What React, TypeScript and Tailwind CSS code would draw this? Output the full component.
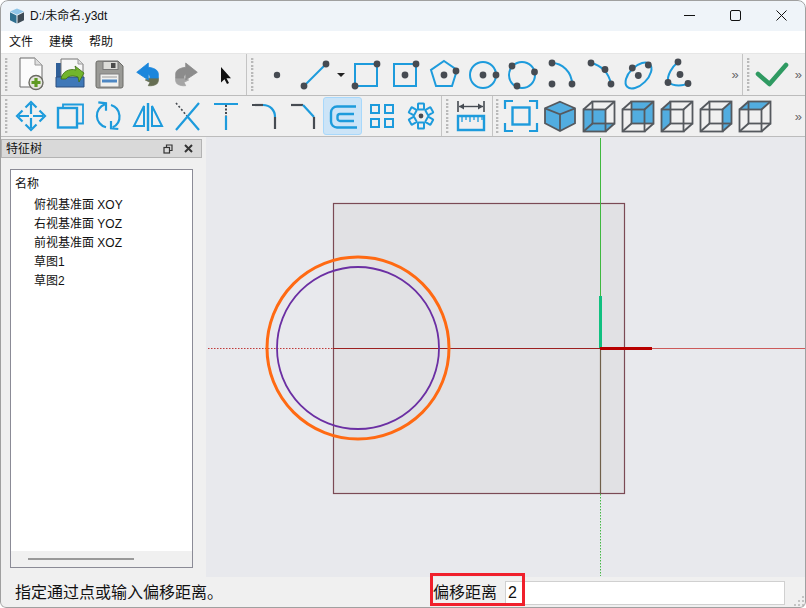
import type { ReactNode } from "react";

const BLUE = "#1d9bdc";
const DARK = "#464b52";

function Icon({ children }: { children: ReactNode }) {
	return (
		<svg width="32" height="32" viewBox="0 0 32 32" fill="none" className="overflow-visible">
			{children}
		</svg>
	);
}

function Dot({ x, y, r = 3.4 }: { x: number; y: number; r?: number }) {
	return <circle cx={x} cy={y} r={r} fill={DARK} />;
}

function Btn({ children, active = false }: { children?: ReactNode; active?: boolean }) {
	return (
		<div
			className={`w-[39px] h-[38px] shrink-0 flex items-center justify-center rounded-[3px] border ${
				active ? "bg-[#cce4f7] border-[#a8d8fb]" : "border-transparent"
			}`}
		>
			{children}
		</div>
	);
}

function Grip() {
	return (
		<div className="w-[4px] h-[34px] shrink-0 flex flex-col justify-between">
			{Array.from({ length: 10 }).map((_, i) => (
				<div key={i} className="h-[2px] w-[3px] border-l-2 border-dotted border-[#b9b9b9] bg-[#dcdcdc]" />
			))}
		</div>
	);
}

function Sep() {
	return <div className="w-px self-stretch shrink-0 bg-[#c4c4c4]" />;
}

function More({ className = "" }: { className?: string }) {
	return <span className={`text-[13px] leading-none text-[#666] font-['Liberation_Sans',sans-serif] ${className}`}>»</span>;
}

function NewIcon() {
	return (
		<Icon>
			<path d="M5 -1h15l7 7v22H5z" fill="#fbfbfb" stroke="#6a6a6a" strokeWidth="1" />
			<path d="M20 -1v7h7" fill="#dedede" stroke="#9a9a9a" />
			<circle cx="21" cy="23.500" r="7" fill="#e6e6e0" stroke="#6b6b63" strokeWidth="1.400" />
			<path d="M21 19v9M16.500 23.500h9" stroke="#5f9a22" strokeWidth="3.200" />
		</Icon>
	);
}

function OpenIcon() {
	return (
		<Icon>
			<path d="M2 4h6v16H2z" fill="#2f5f98" />
			<path d="M7 0h17l5 5v16H7z" fill="#f7f7f7" stroke="#777" />
			<path d="M24 0v5h5" fill="#ddd" stroke="#999" />
			<path d="M2 18h4c2-1 3-1 5 0h19v10H2z" fill="#3f78b8" stroke="#2c4f7e" />
			<path d="M7 20c1-7 8-11 15-9l-1-4 9 7-5 9-1-5c-6-2-10-1-12 2z" fill="#72b52c" stroke="#3c6d14" strokeWidth="0.800" />
		</Icon>
	);
}

function SaveIcon() {
	return (
		<Icon>
			<path d="M3 4a2 2 0 0 1 2-2h20l5 5v20a2 2 0 0 1-2 2H5a2 2 0 0 1-2-2z" fill="#9a9a96" stroke="#6a6a66" />
			<rect x="10" y="2.500" width="15" height="8" fill="#dcdcd8" stroke="#777" />
			<rect x="18" y="4" width="4.500" height="5" fill="#4b4b4b" />
			<rect x="7" y="15" width="19" height="13" fill="#f0f0ee" stroke="#808080" />
			<path d="M9 18h15" stroke="#9a9a9a" />
			<path d="M9 22h15" stroke="#4d87c4" strokeWidth="3" />
		</Icon>
	);
}

function TurnIcon({ top, under, flip = false }: { top: string; under: string; flip?: boolean }) {
	return (
		<Icon>
			<g transform={flip ? "matrix(-1 0 0 1 31 0)" : undefined} strokeLinejoin="round">
				<path d="M13.300 21 18 19h8.300c.5 3-.5 5-1.600 6-2.200 1.500-5.400 2-8.400 1.700l1.700-3.400z" fill={under} stroke={under} strokeWidth="0.800" />
				<path d="M4.700 13.300 16.300 4v4.300c5 .5 10 2.500 10 6.700v4h-8.300c0-2-1-3.500-1.700-3.500V21z" fill={top} stroke={top} strokeWidth="0.800" />
			</g>
		</Icon>
	);
}

function CursorIcon() {
	return (
		<Icon>
			<path d="M11 8v15.500l3.500-3.200 2.500 4.700 2-1-2.500-4.700H21z" fill="#111" />
		</Icon>
	);
}

function MoveIcon() {
	return (
		<Icon>
			<g stroke={BLUE} strokeWidth="2.200">
				<path d="M4 16h10M18 16h10M16 4v10M16 18v10" />
				<path d="M10.500 7.500l5.500-5.500 5.500 5.500M10.500 24.500l5.500 5.500 5.500-5.500M7.500 10.500 2 16l5.500 5.500M24.500 10.500 30 16l-5.500 5.500" />
			</g>
		</Icon>
	);
}

function CopyIcon() {
	return (
		<Icon>
			<path d="M9 8V4.500h20v19h-6" stroke={BLUE} strokeWidth="1.800" />
			<rect x="4" y="8" width="19" height="19.500" stroke={BLUE} strokeWidth="2.400" />
		</Icon>
	);
}

function RotateIcon() {
	return (
		<Icon>
			<g stroke={BLUE} strokeWidth="2.200">
				<path d="M13 27.300A12 12 0 0 1 12 4.300" />
				<path d="M5.300 2.300 13 3.300v7.400" />
				<path d="M18 5A12 12 0 0 1 19.700 27.300" />
				<path d="M25.300 29 18 28.300V21" />
			</g>
		</Icon>
	);
}

function MirrorIcon() {
	return (
		<Icon>
			<g stroke={BLUE} strokeWidth="2">
				<path d="M16 3v28" strokeWidth="2.400" />
				<path d="M12 6 2 26h10zM20 6l10 20H20z" />
			</g>
		</Icon>
	);
}

function TrimIcon() {
	return (
		<Icon>
			<path d="M5 3l11 13" stroke={DARK} strokeWidth="1.600" strokeDasharray="2 2" />
			<path d="M16 16l12 14M28 3 5 30" stroke={BLUE} strokeWidth="2.200" />
		</Icon>
	);
}

function ExtendIcon() {
	return (
		<Icon>
			<path d="M4 4h24" stroke={BLUE} strokeWidth="2.200" />
			<path d="M16 5v11" stroke={DARK} strokeWidth="2" strokeDasharray="2 1.500" />
			<path d="M16 16v14" stroke={BLUE} strokeWidth="2.200" />
		</Icon>
	);
}

function FilletIcon() {
	return (
		<Icon>
			<path d="M3 5h11" stroke={DARK} strokeWidth="2.200" />
			<path d="M14 5c7 0 12 5 12 12" stroke={BLUE} strokeWidth="2.200" />
			<path d="M26 17v12" stroke={DARK} strokeWidth="2.200" />
		</Icon>
	);
}

function ChamferIcon() {
	return (
		<Icon>
			<path d="M3 5h12" stroke={DARK} strokeWidth="2.200" />
			<path d="M15 5l11 12" stroke={BLUE} strokeWidth="2.200" />
			<path d="M26 17v12" stroke={DARK} strokeWidth="2.200" />
		</Icon>
	);
}

function OffsetIcon() {
	return (
		<Icon>
			<g stroke={BLUE} strokeWidth="2.400">
				<path d="M29 6.500H10a6 6 0 0 0-6 6v9a6 6 0 0 0 6 6h20" />
				<path d="M27 14H13a2.500 2.500 0 0 0-2.500 2.500v2a2.500 2.500 0 0 0 2.500 2.500h14" />
			</g>
		</Icon>
	);
}

function GridIcon() {
	return (
		<Icon>
			<g stroke={BLUE} strokeWidth="2">
				<rect x="5" y="5" width="8" height="8" />
				<rect x="19" y="5" width="8" height="8" />
				<rect x="5" y="19" width="8" height="8" />
				<rect x="19" y="19" width="8" height="8" />
			</g>
		</Icon>
	);
}

function RingIcon() {
	return (
		<Icon>
			{[0, 60, 120, 180, 240, 300].map((a) => (
				<rect
					key={a}
					x="13"
					y="3.500"
					width="6"
					height="6"
					rx="0.500"
					stroke={BLUE}
					strokeWidth="2"
					transform={`rotate(${a} 16 16)`}
				/>
			))}
			<Dot x={16} y={16} r={2.400} />
		</Icon>
	);
}

function DimIcon() {
	return (
		<Icon>
			<path d="M3 1v11M29 1v11" stroke={DARK} strokeWidth="1.600" />
			<path d="M4 6.500h24" stroke={DARK} strokeWidth="1.400" />
			<path d="M4 6.500l5-3v6zM28 6.500l-5-3v6z" fill={DARK} />
			<path d="M3 16h26v14H3z" stroke={BLUE} strokeWidth="2.400" />
			<path d="M7 16v6M11 16v4M15 16v6M19 16v4M23 16v6M27 16v4" stroke={BLUE} strokeWidth="1.300" />
		</Icon>
	);
}

function FitIcon() {
	return (
		<Icon>
			<g stroke={BLUE} strokeWidth="2.200">
				<path d="M0 9V1h8M24 1h8v8M32 23v8h-8M8 31H0v-8" />
				<rect x="7.500" y="7.500" width="17" height="17" strokeWidth="2.400" />
			</g>
		</Icon>
	);
}

function SolidCube() {
	return (
		<Icon>
			<path d="M16 1.700 31 8.300v15L16 31 1 23.300v-15z" fill="#52ade0" stroke="#55595e" strokeWidth="1.800" />
			<path d="M1 8.300l15 6 15-6M16 14.300V31" stroke="#55595e" strokeWidth="1.800" />
		</Icon>
	);
}

// faces of the wire cube that get the blue fill
const cubeFaces = {
	front: "M0.500 9.500h22v22h-22z M0.500 31.500l9-8h22l-9 8z",
	back: "M9.500 1.500h22v22h-22z",
	left: "M0.500 9.500l9-8v22l-9 8z",
	right: "M22.500 9.500l9-8v22l-9 8z",
	top: "M0.500 9.500l9-8h22l-9 8z",
};

function WireCube({ face }: { face: keyof typeof cubeFaces }) {
	return (
		<Icon>
			<path d={cubeFaces[face]} fill="#52ade0" />
			<g stroke="#55595e" strokeWidth="1.800">
				<rect x="9.500" y="1.500" width="22" height="22" />
				<rect x="0.500" y="9.500" width="22" height="22" />
				<path d="M0.500 9.500l9-8M22.500 9.500l9-8M0.500 31.500l9-8M22.500 31.500l9-8" />
			</g>
		</Icon>
	);
}

function ToolbarOne() {
	return (
		<div className="flex items-center h-[42px] bg-[#f0f0f0] border-b border-[#bcbcbc] pl-[5px]">
			<Grip />
			<div className="w-[2px]" />
			<Btn><NewIcon /></Btn>
			<Btn><OpenIcon /></Btn>
			<Btn><SaveIcon /></Btn>
			<Btn><TurnIcon top="#1b86dc" under="#666e52" /></Btn>
			<Btn><TurnIcon top="#8c8c8c" under="#a5a5a5" flip /></Btn>
			<Btn><CursorIcon /></Btn>
			<div className="w-px" />
			<Sep />
			<div className="w-[4px]" />
			<Grip />
			<div className="w-[2px]" />
			<Btn>
				<Icon><Dot x={16} y={16} r={3.200} /></Icon>
			</Btn>
			<Btn>
				<Icon>
					<path d="M4 27 26 5" stroke={BLUE} strokeWidth="2" />
					<Dot x={4} y={27} /><Dot x={26} y={5} />
				</Icon>
			</Btn>
			<div className="w-[11px] flex justify-center">
				<div className="border-x-[4px] border-t-[4px] border-x-transparent border-t-[#222]" />
			</div>
			<Btn>
				<Icon>
					<rect x="5" y="5" width="22" height="22" stroke={BLUE} strokeWidth="2" />
					<Dot x={5} y={27} /><Dot x={27} y={5} />
				</Icon>
			</Btn>
			<Btn>
				<Icon>
					<rect x="5" y="5" width="22" height="22" stroke={BLUE} strokeWidth="2" />
					<Dot x={16} y={16} /><Dot x={27} y={5} />
				</Icon>
			</Btn>
			<Btn>
				<Icon>
					<path d="M16 2 29 11l-5 16H8L3 11z" stroke={BLUE} strokeWidth="2" />
					<Dot x={16} y={16} /><Dot x={28} y={12} />
				</Icon>
			</Btn>
			<Btn>
				<Icon>
					<circle cx="16" cy="16" r="13" stroke={BLUE} strokeWidth="2" />
					<Dot x={16} y={16} /><Dot x={29} y={16} />
				</Icon>
			</Btn>
			<Btn>
				<Icon>
					<circle cx="16" cy="16" r="13" stroke={BLUE} strokeWidth="2" />
					<Dot x={6} y={7} /><Dot x={28.500} y={13} /><Dot x={11} y={27} />
				</Icon>
			</Btn>
			<Btn>
				<Icon>
					<path d="M7 4c10 0 20 9 20 21" stroke={BLUE} strokeWidth="2" />
					<Dot x={7} y={4} /><Dot x={7} y={25} /><Dot x={27} y={25} />
				</Icon>
			</Btn>
			<Btn>
				<Icon>
					<path d="M7 4c10 2 18 10 20 21" stroke={BLUE} strokeWidth="2" />
					<Dot x={7} y={4} /><Dot x={21} y={10.500} /><Dot x={27} y={25} />
				</Icon>
			</Btn>
			<Btn>
				<Icon>
					<ellipse cx="15.500" cy="16.500" rx="16" ry="9" transform="rotate(-45 15.500 16.500)" stroke={BLUE} strokeWidth="2" />
					<Dot x={9.300} y={9} /><Dot x={25.300} y={6} /><Dot x={15.300} y={16.500} />
				</Icon>
			</Btn>
			<Btn>
				<Icon>
					<path d="M16 3C10 8 5 16 6 23c6 5 16 4 20 1" stroke={BLUE} strokeWidth="2" />
					<Dot x={16} y={3} /><Dot x={18} y={15.500} /><Dot x={6} y={23.500} /><Dot x={26} y={24.500} />
				</Icon>
			</Btn>
			<div className="flex-1 flex justify-end pr-[3px]"><More /></div>
			<Sep />
			<div className="w-[4px]" />
			<Grip />
			<div className="w-[3px]" />
			<div className="w-[35px] flex justify-center">
				<Icon>
					<path d="M3 15l11.500 10L31 6" stroke="#2f9a62" strokeWidth="4.600" strokeLinecap="round" strokeLinejoin="round" />
				</Icon>
			</div>
			<More className="ml-[6px] mr-[4px]" />
		</div>
	);
}

function ToolbarTwo() {
	return (
		<div className="flex items-center h-[41px] bg-[#f0f0f0] border-b border-[#bcbcbc] pl-[5px]">
			<Grip />
			<div className="w-[2px]" />
			<Btn><MoveIcon /></Btn>
			<Btn><CopyIcon /></Btn>
			<Btn><RotateIcon /></Btn>
			<Btn><MirrorIcon /></Btn>
			<Btn><TrimIcon /></Btn>
			<Btn><ExtendIcon /></Btn>
			<Btn><FilletIcon /></Btn>
			<Btn><ChamferIcon /></Btn>
			<Btn active><OffsetIcon /></Btn>
			<Btn><GridIcon /></Btn>
			<Btn><RingIcon /></Btn>
			<div className="w-px" />
			<Sep />
			<div className="w-[4px]" />
			<Grip />
			<div className="w-px" />
			<Btn><DimIcon /></Btn>
			<div className="w-[2px]" />
			<Sep />
			<div className="w-[3px]" />
			<Grip />
			<div className="w-px" />
			<Btn><FitIcon /></Btn>
			<Btn><SolidCube /></Btn>
			<Btn><WireCube face="front" /></Btn>
			<Btn><WireCube face="back" /></Btn>
			<Btn><WireCube face="left" /></Btn>
			<Btn><WireCube face="right" /></Btn>
			<Btn><WireCube face="top" /></Btn>
			<div className="flex-1 flex justify-end pr-[4px]"><More /></div>
		</div>
	);
}

const treeRows = ["俯视基准面 XOY", "右视基准面 YOZ", "前视基准面 XOZ", "草图1", "草图2"];

function FeatureDock() {
	return (
		<div className="w-[206px] shrink-0 flex flex-col bg-[#f0f0f0] pt-[2px] pl-px">
			<div className="h-[19px] w-[201px] flex items-center justify-between bg-[#d9d9d9] border border-[#b3b3b3] pl-[4px] pr-[8px]">
				<span className="pt-px">特征树</span>
				<div className="flex items-center gap-[11px]">
					<svg width="10" height="10" viewBox="0 0 10 10" fill="none" stroke="#333" strokeWidth="1.200">
						<rect x="1" y="3.500" width="5.500" height="5.500" />
						<path d="M3.500 3.500V1H9v5.500H6.500" />
					</svg>
					<svg width="9" height="9" viewBox="0 0 9 9" stroke="#333" strokeWidth="2">
						<path d="M1 1l7 7M8 1 1 8" />
					</svg>
				</div>
			</div>
			<div className="mt-[11px] ml-[9px] w-[183px] h-[399px] flex flex-col bg-white border border-[#8b8b96]">
				<div className="flex-1 pt-[5px]">
					<div className="h-[19px] pl-[4px] leading-[19px]">名称</div>
					<div className="mt-[2px]">
						{treeRows.map((row) => (
							<div key={row} className="h-[19px] pl-[23px] leading-[19px]">{row}</div>
						))}
					</div>
				</div>
				<div className="h-[16px] bg-[#f0f0f0] flex items-center pl-[17px]">
					<div className="h-[2px] w-[106px] bg-[#999]" />
				</div>
			</div>
		</div>
	);
}

function Sketch() {
	return (
		<svg className="w-full h-full block" viewBox="206 137 600 440" fill="none">
			<rect x="333.500" y="203.500" width="291" height="290" fill="#e1e1e4" stroke="#7b4a55" strokeWidth="1.200" />
			<path d="M208 348.500h125" stroke="#c03a3a" strokeDasharray="1.500 1.500" />
			<path d="M333 348.500h292" stroke="#9c2020" strokeWidth="1.200" />
			<path d="M625 348.500h180" stroke="#cc5a5a" />
			<path d="M600.500 138v158" stroke="#3fb83f" />
			<path d="M600.500 348v146" stroke="#70604a" strokeWidth="1.200" />
			<path d="M600.500 494v82" stroke="#45b845" strokeDasharray="1.500 1.500" />
			<circle cx="358" cy="348" r="91" stroke="#ff6a13" strokeWidth="3" />
			<circle cx="358" cy="348" r="81" stroke="#6b2fa3" strokeWidth="1.800" />
			<path d="M600.500 296v52" stroke="#10c080" strokeWidth="3" />
			<path d="M600 348.500h52" stroke="#b80000" strokeWidth="3" />
		</svg>
	);
}

export default function App() {
	return (
		<div className="relative w-[806px] h-[608px] flex flex-col overflow-hidden rounded-t-lg rounded-b-md bg-[#f0f0f0] text-[12px] text-[#111] font-['Liberation_Sans','Noto_Sans_CJK_SC',sans-serif]">
			{/* Title bar */}
			<div className="h-[31px] shrink-0 flex items-center bg-[#eff4f9] pl-[9px]">
				<svg width="16" height="16" viewBox="0 0 16 16">
					<path d="M8 0.500l7 3L8 6.800 1 3.500z" fill="#8fc5e8" />
					<path d="M1 4.300 7.500 7.500V15.500L1 12.300z" fill="#2f6f8f" />
					<path d="M15 4.300 8.500 7.500V15.500L15 12.300z" fill="#3d4a55" />
				</svg>
				<span className="ml-[5px]">D:/未命名.y3dt</span>
				<div className="ml-auto flex items-center gap-[35px] pr-[19px]">
					<svg width="11" height="11" viewBox="0 0 11 11" stroke="#111"><path d="M0 5.500h11" /></svg>
					<svg width="11" height="11" viewBox="0 0 11 11" fill="none" stroke="#111"><rect x="0.500" y="0.500" width="10" height="10" rx="1.500" /></svg>
					<svg width="11" height="11" viewBox="0 0 11 11" stroke="#111"><path d="M0.500 0.500l10 10M10.500 0.500l-10 10" /></svg>
				</div>
			</div>
			{/* Menu */}
			<div className="h-[23px] shrink-0 flex items-center gap-[16px] bg-white pl-[9px] border-b border-[#e6e6e6]">
				<span>文件</span>
				<span>建模</span>
				<span>帮助</span>
			</div>
			<ToolbarOne />
			<ToolbarTwo />
			<div className="flex-1 min-h-0 flex">
				<FeatureDock />
				<div className="flex-1 bg-[#e8e9ed]">
					<Sketch />
				</div>
			</div>
			{/* Status */}
			<div className="relative h-[31px] shrink-0 flex items-center bg-[#f0f0f0] text-[16px] pl-[15px]">
				<span>指定通过点或输入偏移距离。</span>
				<div className="ml-auto flex items-center mr-[21px]">
					<span>偏移距离</span>
					<div className="ml-[8px] w-[280px] h-[24px] bg-white border border-[#d0d0d0] pl-[2px] leading-[22px]">2</div>
				</div>
				<div className="absolute left-[430px] top-[-4px] w-[95px] h-[33px] border-[3px] border-[#f0202c]" />
				<svg className="absolute right-[2px] bottom-[2px]" width="10" height="10" viewBox="0 0 10 10" fill="#c4c4c4">
					<rect x="8" y="0" width="2" height="2" />
					<rect x="4" y="4" width="2" height="2" />
					<rect x="8" y="4" width="2" height="2" />
					<rect x="0" y="8" width="2" height="2" />
					<rect x="4" y="8" width="2" height="2" />
					<rect x="8" y="8" width="2" height="2" />
				</svg>
			</div>
			{/* Window edge */}
			<div className="absolute inset-0 rounded-t-lg rounded-b-md border border-[#a0a0a0] pointer-events-none" />
		</div>
	);
}
